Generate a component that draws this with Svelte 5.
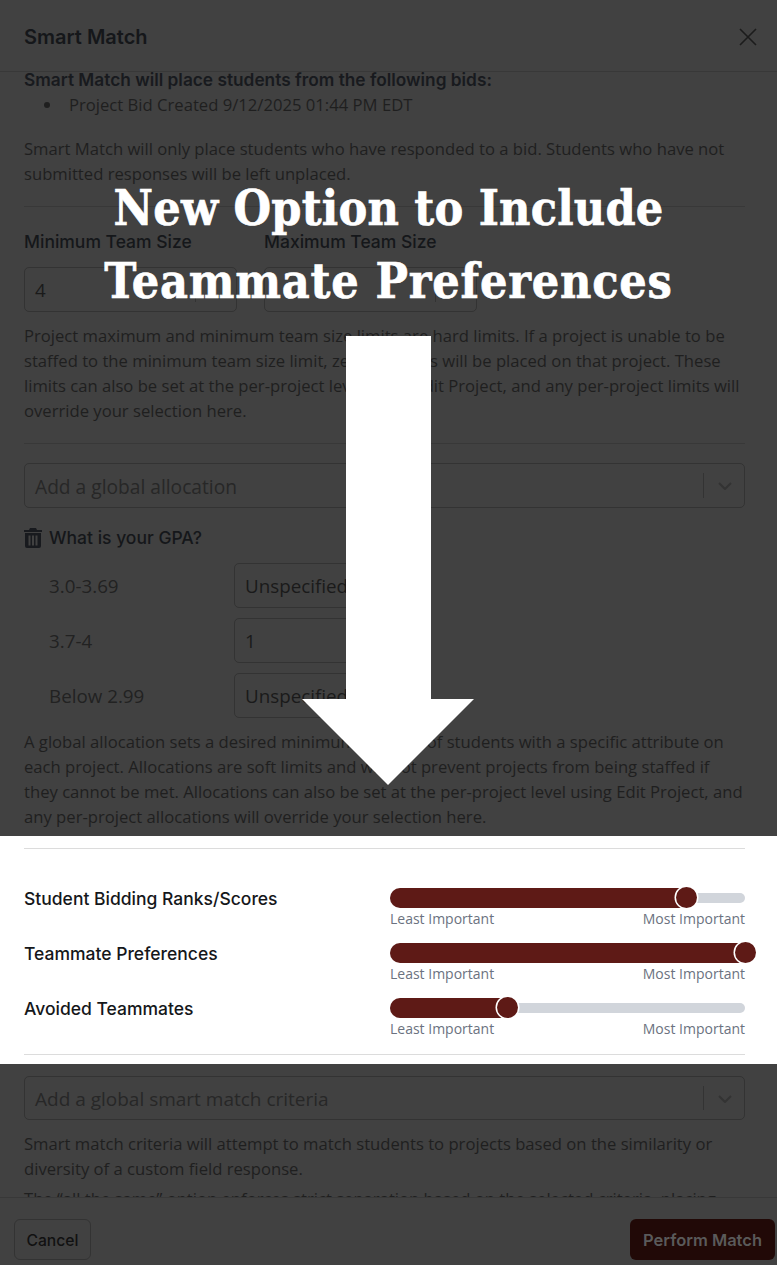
<script>
  const sliders = [
    { label: 'Student Bidding Ranks/Scores', pct: 83.6 },
    { label: 'Teammate Preferences', pct: 100 },
    { label: 'Avoided Teammates', pct: 33 }
  ];
  const gpa = [
    { label: '3.0-3.69', value: 'Unspecified' },
    { label: '3.7-4', value: '1' },
    { label: 'Below 2.99', value: 'Unspecified' }
  ];
</script>

<div class="page">
  <header class="head">
    <h1>Smart Match</h1>
    <svg class="close" viewBox="0 0 18 18" width="18" height="18" aria-hidden="true"><path d="M1 1l16 16M17 1L1 17" stroke="#1c1c1c" stroke-width="1.6" fill="none"/></svg>
  </header>

  <main class="body">
    <p class="strong">Smart Match will place students from the following bids:</p>
    <ul><li>Project Bid Created 9/12/2025 01:44 PM EDT</li></ul>
    <p class="para gap">Smart Match will only place students who have responded to a bid. Students who have not submitted responses will be left unplaced.</p>
    <hr class="rule r1" />

    <div class="sizes">
      <div class="size">
        <span class="lab">Minimum Team Size</span>
        <div class="box"><span>4</span><i class="sep"></i></div>
      </div>
      <div class="size">
        <span class="lab">Maximum Team Size</span>
        <div class="box"><span></span><i class="sep"></i></div>
      </div>
    </div>

    <p class="para p2">Project maximum and minimum team size limits are hard limits. If a project is unable to be staffed to the minimum team size limit, zero students will be placed on that project. These limits can also be set at the per-project level using Edit Project, and any per-project limits will override your selection here.</p>
    <hr class="rule r2" />

    <div class="box select">
      <span class="ph">Add a global allocation</span>
      <i class="sep"></i>
      <svg viewBox="0 0 14 8" width="14" height="8" aria-hidden="true"><path d="M1 1l6 6 6-6" stroke="#333" stroke-width="2" fill="none"/></svg>
    </div>

    <div class="gpa">
      <svg viewBox="0 0 18 20" width="18" height="20" aria-hidden="true"><path fill="#181a1e" fill-rule="evenodd" d="M6 0h6l1 2h5v2H0V2h5zM1 5h16v13a2 2 0 0 1-2 2H3a2 2 0 0 1-2-2zm3.500 2.500v10h2v-10zm3.500 0v10h2v-10zm3.500 0v10h2v-10z"/></svg>
      <span class="lab">What is your GPA?</span>
    </div>

    <div class="rows">
      {#each gpa as g}
        <div class="row">
          <span class="rl">{g.label}</span>
          <div class="box val"><span>{g.value}</span></div>
        </div>
      {/each}
    </div>

    <p class="para p3">A global allocation sets a desired minimum number of students with a specific attribute on each project. Allocations are soft limits and will not prevent projects from being staffed if they cannot be met. Allocations can also be set at the per-project level using Edit Project, and any per-project allocations will override your selection here.</p>

    <section class="band">
      <hr class="lite" />
      <div class="sliders">
        {#each sliders as s}
          <div class="sl">
            <span class="sl-lab">{s.label}</span>
            <div class="ctl">
              <div class="track">
                <div class="fill" style="width:{s.pct}%"></div>
                <div class="thumb" style="left:{s.pct}%"></div>
              </div>
              <div class="ends"><span>Least Important</span><span>Most Important</span></div>
            </div>
          </div>
        {/each}
      </div>
      <hr class="lite" />
    </section>

    <div class="box select s2">
      <span class="ph">Add a global smart match criteria</span>
      <i class="sep"></i>
      <svg viewBox="0 0 14 8" width="14" height="8" aria-hidden="true"><path d="M1 1l6 6 6-6" stroke="#333" stroke-width="2" fill="none"/></svg>
    </div>
    <p class="para p4">Smart match criteria will attempt to match students to projects based on the similarity or diversity of a custom field response.</p>
    <p class="para p5">The “all the same” option enforces strict separation based on the selected criteria, placing</p>
  </main>

  <footer class="foot">
    <button class="cancel">Cancel</button>
    <button class="go">Perform Match</button>
  </footer>

  <div class="headline"><span>New Option to Include</span><span class="l2">Teammate Preferences</span></div>
  <svg class="arrow" viewBox="0 0 172 449" width="172" height="449" aria-hidden="true"><path fill="#fff" d="M44 0h85v363h43L86 449 0 363h44z"/></svg>
</div>

<style>
  :global(body) { margin: 0; background: #414141; }
  .page {
    position: relative;
    width: 777px;
    height: 1265px;
    overflow: hidden;
    display: flex;
    flex-direction: column;
    background: #414141;
    color: #1f1f1f;
    font-family: "Open Sans", sans-serif;
    font-size: 16.650px;
    line-height: 25px;
  }
  .head {
    flex: none;
    height: 72px;
    box-sizing: border-box;
    padding: 2px 20px 0 24px;
    display: flex;
    align-items: center;
    justify-content: space-between;
    border-bottom: 1px solid #383838;
  }
  h1 {
    margin: 0;
    font: 600 20px/28px Inter, sans-serif;
    color: #15171a;
  }
  .body {
    flex: 1;
    min-height: 0;
    overflow: hidden;
    padding: 0 32px 0 24px;
  }
  p { margin: 0; }
  .strong {
    font: 600 17.300px/15px Inter, sans-serif;
    color: #181a1e;
    margin-bottom: 5px;
  }
  ul { margin: 0; padding: 0 0 0 45px; list-style: none; }
  li { position: relative; }
  li::before {
    content: "";
    position: absolute;
    left: -25px;
    top: 10px;
    width: 6px;
    height: 6px;
    border-radius: 50%;
    background: #1f1f1f;
  }
  .para { color: #1f1f1f; }
  .gap { margin-top: 19px; }
  .rule { border: 0; border-top: 1px solid #383838; margin: 0; }
  .r1 { margin-top: 20px; }
  .r2 { margin-top: 20px; }
  .sizes { display: flex; gap: 27px; margin-top: 23px; }
  .size { display: flex; flex-direction: column; gap: 13px; width: 213px; }
  .lab { font: 500 17.500px/24px Inter, sans-serif; color: #15171a; }
  .box {
    position: relative;
    box-sizing: border-box;
    height: 45px;
    display: flex;
    align-items: center;
    padding: 2px 10px 0;
    border: 1px solid #333;
    border-radius: 5px;
    font-size: 18.800px;
    color: #1a1a1a;
  }
  .sep {
    position: absolute;
    right: 40px;
    top: 9px;
    bottom: 9px;
    border-left: 1px solid #333;
  }
  .select { margin-top: 19px; justify-content: space-between; padding-right: 12px; }
  .select svg { margin-top: -2px; }
  .ph { color: #272727; font-size: 19.200px; }
  .gpa { display: flex; align-items: center; gap: 7px; margin-top: 18px; height: 24px; }
  .rows { display: flex; flex-direction: column; gap: 10px; margin-top: 13px; padding-left: 25px; }
  .row { display: flex; align-items: center; }
  .rl { width: 185px; font-size: 18.800px; color: #222; padding-top: 2px; }
  .val { width: 190px; }
  .p2 { margin-top: 11px; }
  .p3 { margin-top: 11px; }
  .band {
    margin: 7px -32px 0 -24px;
    padding: 12px 32px 9px 24px;
    height: 228px;
    box-sizing: border-box;
    background: #fff;
    display: flex;
    flex-direction: column;
  }
  .lite { border: 0; border-top: 1px solid #dcdcdc; margin: 0; width: 100%; }
  .sliders { flex: 1; display: flex; flex-direction: column; gap: 13px; padding-top: 39px; }
  .sl { display: flex; height: 42px; }
  .sl-lab { width: 366px; padding-top: 1px; font: 500 17.500px/20px Inter, sans-serif; color: #15171a; }
  .ctl { width: 355px; }
  .track {
    position: relative;
    height: 10px;
    margin: 5px 0;
    border-radius: 5px;
    background: #d1d5db;
  }
  .fill {
    position: absolute;
    left: 0;
    top: -5px;
    height: 20px;
    border-radius: 10px 0 0 10px;
    background: #5e1a16;
  }
  .thumb {
    position: absolute;
    top: -6px;
    width: 21px;
    height: 21px;
    margin-left: -10.500px;
    box-sizing: border-box;
    border-radius: 50%;
    background: #5e1a16;
    box-shadow: 0 0 0 1.500px #fff;
  }
  .ends {
    display: flex;
    justify-content: space-between;
    font-size: 14px;
    line-height: 18px;
    color: #6b7280;
    margin-top: 7px;
  }
  .s2 { margin-top: 12px; height: 44px; padding-top: 3px; }
  .s2 .ph { font-size: 19px; }
  .p4 { margin-top: 11px; }
  .p5 { margin-top: 5px; }
  .foot {
    flex: none;
    height: 68px;
    box-sizing: border-box;
    border-top: 1px solid #383838;
    padding: 21px 2px 4px 14px;
    display: flex;
    justify-content: space-between;
    align-items: flex-start;
    background: #414141;
  }
  button {
    border-radius: 6px;
    height: 41px;
    margin: 0;
  }
  .cancel {
    width: 77px;
    padding: 2px 0 0;
    background: transparent;
    border: 1px solid #333;
    color: #111;
    font: 500 15.700px/24px Inter, sans-serif;
  }
  .go {
    width: 145px;
    padding: 1px 0 0;
    border: 0;
    background: #210907;
    color: #5a5a5a;
    font: 600 16.500px/24px Inter, sans-serif;
  }
  .headline {
    position: absolute;
    left: 0;
    right: 0;
    top: 172px;
    display: flex;
    flex-direction: column;
    align-items: center;
    font-family: "DejaVu Serif Condensed", "DejaVu Serif", serif;
    font-stretch: condensed;
    font-weight: 700;
    font-size: 48px;
    line-height: 73px;
    letter-spacing: 0.200px;
    color: #fff;
    white-space: nowrap;
    -webkit-text-stroke: 0.6px #fff;
  }
  .l2 { letter-spacing: 0.800px; }
  .arrow { position: absolute; left: 302px; top: 336px; }
</style>
